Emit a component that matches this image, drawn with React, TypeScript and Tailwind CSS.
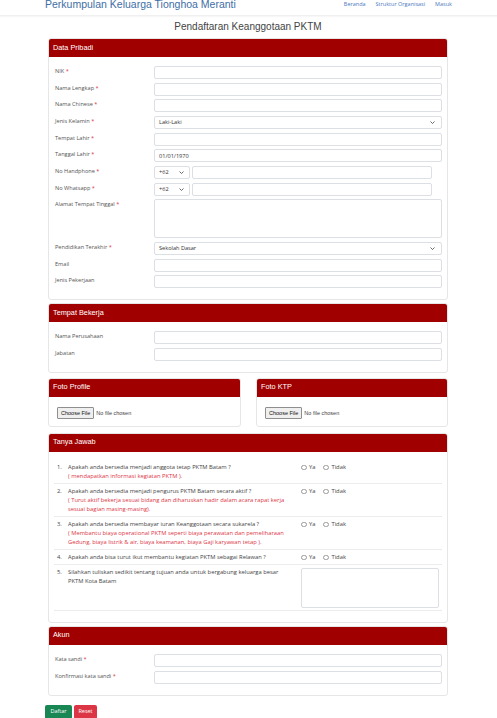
import React from "react";

const RED = "bg-[#a00000]";

function Chevron() {
  return (
    <svg width="5" height="3" viewBox="0 0 10 6" className="shrink-0">
      <path d="M1 1l4 4 4-4" fill="none" stroke="#444" strokeWidth="1.6" />
    </svg>
  );
}

function Input({ value, select, h = "h-[13px]" }: { value?: string; select?: boolean; h?: string }) {
  return (
    <div className={`${h} w-full border border-[#dcdfe3] rounded-[2px] bg-white flex items-center justify-between pl-[4px] pr-[6px] text-[5.6px] text-[#333]`}>
      <span>{value ?? ""}</span>
      {select && <Chevron />}
    </div>
  );
}

function Row({ label, req, children }: { label: string; req?: boolean; children: React.ReactNode }) {
  return (
    <div className="flex">
      <div className="w-[99px] shrink-0 pt-[1px] leading-[9px] text-[5.6px] text-[#555]">
        {label}
        {req && <span className="text-[#dc3545]"> *</span>}
      </div>
      <div className="flex-1 min-w-0">{children}</div>
    </div>
  );
}

function PhoneRow({ label }: { label: string }) {
  return (
    <Row label={label} req>
      <div className="flex gap-[2px] pr-[10px]">
        <div className="w-[36px] shrink-0">
          <div className="h-[13px] border border-[#dcdfe3] rounded-[2px] flex items-center justify-between pl-[4px] pr-[5px] text-[5.6px] text-[#333]">
            <span>+62</span>
            <Chevron />
          </div>
        </div>
        <div className="flex-1">
          <Input />
        </div>
      </div>
    </Row>
  );
}

function Card({ title, children, className = "" }: { title: string; children: React.ReactNode; className?: string }) {
  return (
    <div className={`border border-[#e6e6e6] rounded-[3px] bg-white ${className}`}>
      <div className={`${RED} h-[18px] rounded-t-[2px] flex items-center px-[4px] text-white text-[7.3px] font-['Liberation_Sans',Arial,sans-serif]`}>
        {title}
      </div>
      {children}
    </div>
  );
}

function Radio({ label }: { label: string }) {
  return (
    <div className="flex items-center gap-[2.5px]">
      <div className="w-[5.5px] h-[5.5px] rounded-full border border-[#9a9a9a] bg-white" />
      <span>{label}</span>
    </div>
  );
}

function QRow({ n, q, note, radios = true, textarea }: { n: string; q: React.ReactNode; note?: React.ReactNode; radios?: boolean; textarea?: boolean }) {
  return (
    <div className="flex border-b border-[#ececec] pt-[3px] pb-[2px]">
      <div className="w-[14px] shrink-0 pl-[3px] leading-[9px]">{n}</div>
      <div className="w-[233px] shrink-0 leading-[9px] whitespace-nowrap">
        <div>{q}</div>
        {note && <div className="text-[#dc3545]">{note}</div>}
      </div>
      <div className="flex-1">
        {radios && (
          <div className="flex items-center gap-[8px] h-[9px]">
            <Radio label="Ya" />
            <Radio label="Tidak" />
          </div>
        )}
        {textarea && <div className="h-[40px] w-[138px] border border-[#dcdfe3] rounded-[2px]" />}
      </div>
    </div>
  );
}

function FileInput() {
  return (
    <div className="flex items-center gap-[2px] text-[5.5px] font-['Liberation_Sans',Arial,sans-serif]">
      <div className="h-[12px] px-[3px] flex items-center border border-[#8f8f8f] rounded-[1px] bg-[#efefef] text-[#111]">Choose File</div>
      <span className="text-[#444]">No file chosen</span>
    </div>
  );
}

export default function App() {
  return (
    <div className="w-[497px] h-[718px] overflow-hidden bg-white font-['Open_Sans',sans-serif] text-[#333]">
      {/* navbar */}
      <div className="h-[16px] border-b border-[#f0f0f0] shadow-[0_1px_1px_rgba(0,0,0,0.03)]">
        <div className="ml-[45px] w-[407px] flex items-start justify-between">
          <div className="mt-[-1.8px] text-[10.5px] leading-[12px] text-[#3d6ea6] font-['Liberation_Sans',Arial,sans-serif]">
            Perkumpulan Keluarga Tionghoa Meranti
          </div>
          <div className="flex gap-[10px] text-[5.5px] leading-[9px] text-[#4a79c0]">
            <span>Beranda</span>
            <span>Struktur Organisasi</span>
            <span>Masuk</span>
          </div>
        </div>
      </div>

      <div className="ml-[45px] w-[406px]">
        <div className="mt-[5px] text-center text-[10px] leading-[12px] text-[#444] font-['Liberation_Sans',Arial,sans-serif]">
          Pendaftaran Keanggotaan PKTM
        </div>

        <div className="mx-[3px] mt-[5px] flex flex-col">
          <Card title="Data Pribadi">
            <div className="pl-[6px] pr-[5px] pt-[9px] pb-[11px] flex flex-col gap-[3.67px]">
              <Row label="NIK" req><Input /></Row>
              <Row label="Nama Lengkap" req><Input /></Row>
              <Row label="Nama Chinese" req><Input /></Row>
              <Row label="Jenis Kelamin" req><Input value="Laki-Laki" select /></Row>
              <Row label="Tempat Lahir" req><Input /></Row>
              <Row label="Tanggal Lahir" req><Input value="01/01/1970" /></Row>
              <PhoneRow label="No Handphone" />
              <PhoneRow label="No Whatsapp" />
              <Row label="Alamat Tempat Tinggal" req><Input h="h-[39px]" /></Row>
              <Row label="Pendidikan Terakhir" req><Input value="Sekolah Dasar" select /></Row>
              <Row label="Email"><Input /></Row>
              <Row label="Jenis Pekerjaan"><Input /></Row>
            </div>
          </Card>

          <Card title="Tempat Bekerja" className="mt-[3px]">
            <div className="pl-[6px] pr-[5px] pt-[9px] pb-[11px] flex flex-col gap-[3.67px]">
              <Row label="Nama Perusahaan"><Input /></Row>
              <Row label="Jabatan"><Input /></Row>
            </div>
          </Card>

          <div className="mt-[5px] flex justify-between">
            <Card title="Foto Profile" className="w-[193px]">
              <div className="pl-[8px] pt-[10px] pb-[7px]"><FileInput /></div>
            </Card>
            <Card title="Foto KTP" className="w-[192px]">
              <div className="pl-[8px] pt-[10px] pb-[7px]"><FileInput /></div>
            </Card>
          </div>

          <Card title="Tanya Jawab" className="mt-[6px]">
            <div className="px-[5px] pt-[8px] pb-[11px] text-[5.8px] text-[#444]">
              <QRow
                n="1."
                q="Apakah anda bersedia menjadi anggota tetap PKTM Batam ?"
                note="( mendapatkan informasi kegiatan PKTM )."
              />
              <QRow
                n="2."
                q="Apakah anda bersedia menjadi pengurus PKTM Batam secara aktif ?"
                note={<>( Turut aktif bekerja sesuai bidang dan diharuskan hadir dalam acara rapat kerja<br />sesuai bagian masing-masing).</>}
              />
              <QRow
                n="3."
                q="Apakah anda bersedia membayar iuran Keanggotaan secara sukarela ?"
                note={<>( Membantu biaya operational PKTM seperti biaya perawatan dan pemeliharaan<br />Gedung, biaya listrik &amp; air, biaya keamanan, biaya Gaji karyawan tetap ).</>}
              />
              <QRow n="4." q="Apakah anda bisa turut ikut membantu kegiatan PKTM sebagai Relawan ?" />
              <QRow
                n="5."
                q={<>Silahkan tuliskan sedikit tentang tujuan anda untuk bergabung keluarga besar<br />PKTM Kota Batam</>}
                radios={false}
                textarea
              />
            </div>
          </Card>

          <Card title="Akun" className="mt-[3px]">
            <div className="pl-[6px] pr-[5px] pt-[9px] pb-[11px] flex flex-col gap-[3.67px]">
              <Row label="Kata sandi" req><Input /></Row>
              <Row label="Konfirmasi kata sandi" req><Input /></Row>
            </div>
          </Card>
        </div>

        <div className="mt-[9px] flex gap-[2px] text-[5.5px] text-white">
          <div className="h-[14px] w-[27px] flex items-center justify-center rounded-[2px] bg-[#198754]">Daftar</div>
          <div className="h-[14px] w-[23px] flex items-center justify-center rounded-[2px] bg-[#dc3545]">Reset</div>
        </div>
      </div>
    </div>
  );
}
